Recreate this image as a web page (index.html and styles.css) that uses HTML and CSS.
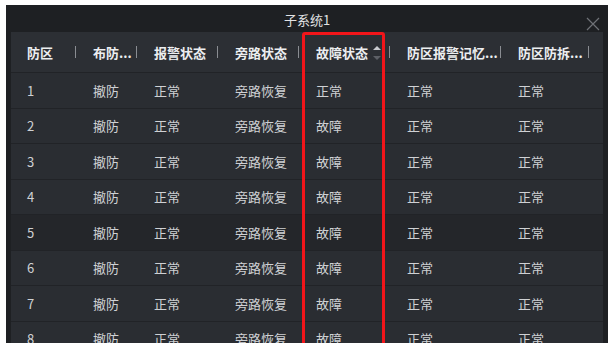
FILE: index.html
```html
<!DOCTYPE html>
<html lang="zh-CN">
<head>
    <meta charset="UTF-8">
    <title>子系统1</title>
    <link rel="stylesheet" href="styles.css">
</head>
<body>
    <section class="dialog">
        <header class="dialog-title">
            <span>子系统1</span>
            <svg class="close" width="14" height="14" viewBox="0 0 14 14">
                <path d="M1 1L13 13M13 1L1 13" stroke="#6f7277" stroke-width="1.2" fill="none"/>
            </svg>
        </header>

        <div class="grid">
            <div class="row head">
                <div class="cell">防区</div>
                <div class="cell">布防...</div>
                <div class="cell">报警状态</div>
                <div class="cell">旁路状态</div>
                <div class="cell sortable">故障状态
                    <span class="sort">
                        <svg width="8" height="16" viewBox="0 0 8 16">
                            <path d="M4 1L8 5H0Z" fill="#c9cbcf"/>
                            <path d="M4 15L8 11H0Z" fill="#5d6066"/>
                        </svg>
                    </span>
                </div>
                <div class="cell">防区报警记忆...</div>
                <div class="cell">防区防拆...</div>
                <div class="cell last"></div>
            </div>
            <div class="body" id="rows"></div>
        </div>

        <div class="highlight"></div>
    </section>

    <script>
        // 子系统防区数据
        const zones = [
            { id: 1, fault: '正常' },
            { id: 2, fault: '故障' },
            { id: 3, fault: '故障' },
            { id: 4, fault: '故障' },
            { id: 5, fault: '故障' },
            { id: 6, fault: '故障' },
            { id: 7, fault: '故障' },
            { id: 8, fault: '故障' }
        ];
        const rows = document.getElementById('rows');
        zones.forEach(z => {
            const cls = z.id === 5 ? 'row hover' : 'row';
            rows.insertAdjacentHTML('beforeend', `
                <div class="${cls}">
                    <div class="cell">${z.id}</div>
                    <div class="cell">撤防</div>
                    <div class="cell">正常</div>
                    <div class="cell">旁路恢复</div>
                    <div class="cell">${z.fault}</div>
                    <div class="cell">正常</div>
                    <div class="cell">正常</div>
                    <div class="cell"></div>
                </div>`);
        });
    </script>
</body>
</html>
```

FILE: styles.css
```css
* {
    box-sizing: border-box;
}
body {
    margin: 0;
    background: #fff;
    font-family: "Noto Sans CJK SC", "Noto Sans", sans-serif;
    font-size: 13px;
    height: 343px;
    overflow: hidden;
}
.dialog {
    position: relative;
    margin: 5px 0 0 6px;
    width: 602px;
    height: 338px;
    background: #1e2023;
    overflow: hidden;
}
.dialog-title {
    height: 27px;
    display: flex;
    align-items: center;
    justify-content: center;
    color: #e2e3e5;
    padding-top: 2px;
}
.close {
    position: absolute;
    right: 8px;
    top: 12px;
}
.grid {
    margin: 0 5px;
    background: #2a2d32;
}
.row {
    display: grid;
    grid-template-columns: 66px 61px 81px 81px 91px 111px 88px 1fr;
    height: 35.5px;
    border-top: 1px solid #212327;
    align-items: center;
    color: #cfd1d4;
}
.row.hover {
    background: #24262a;
}
.row.head {
    height: 40px;
    border-top: none;
    background: #2c2f34;
    color: #eceef0;
    font-weight: 600;
}
.cell {
    padding-left: 16px;
    white-space: nowrap;
    overflow: hidden;
}
.head .cell {
    display: flex;
    align-items: center;
    height: 100%;
    padding-right: 1px;
}
.head .cell::after {
    content: "";
    margin-left: auto;
    width: 1px;
    height: 12px;
    background: #8a8d92;
}
.head .cell.last::after {
    display: none;
}
.sort {
    display: flex;
    margin-left: 5px;
    margin-top: 1px;
}
.head .sortable::after {
    margin-left: auto;
}
.highlight {
    position: absolute;
    left: 296px;
    top: 27px;
    width: 83px;
    height: 340px;
    border: 3px solid #f2151a;
    border-radius: 3px;
}
```
